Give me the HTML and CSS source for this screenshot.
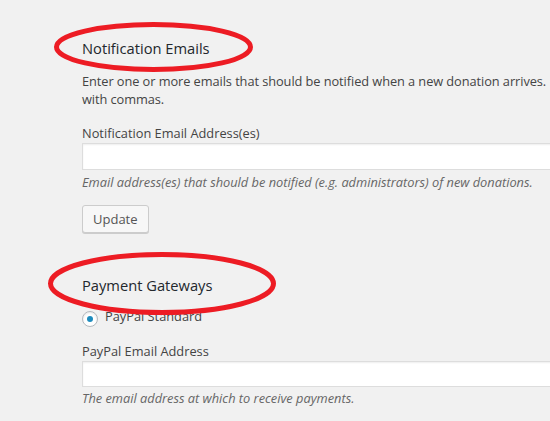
FILE: index.html
```html
<!DOCTYPE html>
<html lang="en">
<head>
<meta charset="utf-8">
<title>Settings</title>
<link rel="stylesheet" href="styles.css">
</head>
<body>
<div class="page">
  <div class="wrap">
    <h3 class="section-title">Notification Emails</h3>
    <p class="intro">Enter one or more emails that should be notified when a new donation arrives.<br>with commas.</p>
    <label class="field-label" for="notify">Notification Email Address(es)</label>
    <input class="text-input" id="notify" type="text">
    <p class="description">Email address(es) that should be notified (e.g. administrators) of new donations.</p>
    <button class="button" type="button">Update</button>

    <h3 class="section-title gateways">Payment Gateways</h3>
    <div class="radio-row">
      <span class="radio checked"></span>
      <span class="radio-label">PayPal Standard</span>
    </div>
    <label class="field-label paypal" for="paypal">PayPal Email Address</label>
    <input class="text-input short" id="paypal" type="text">
    <p class="description tight">The email address at which to receive payments.</p>
  </div>

  <svg class="annotations" width="550" height="421" viewBox="0 0 550 421">
    <ellipse cx="153.5" cy="47" rx="97" ry="22.5" />
    <ellipse cx="162" cy="283.5" rx="111.5" ry="29" />
  </svg>
</div>
</body>
</html>
```
FILE: styles.css
```css
html, body {
  margin: 0;
  padding: 0;
}
body {
  background: #f1f1f1;
  font-family: "Open Sans", "Liberation Sans", sans-serif;
  font-size: 12.8px;
  line-height: 18px;
  color: #444;
  width: 550px;
  height: 421px;
  overflow: hidden;
}
.page {
  position: relative;
  width: 550px;
  height: 421px;
  overflow: hidden;
}
.wrap {
  padding: 38px 0 0 82px;
  width: 700px;
  display: flex;
  flex-direction: column;
  align-items: flex-start;
}
.section-title {
  margin: 0;
  font-size: 14.7px;
  font-weight: 500;
  line-height: 20px;
  color: #23282d;
}
.intro {
  margin: 14px 0 0;
  white-space: nowrap;
  letter-spacing: -0.07px;
}
.field-label {
  margin-top: 16px;
  display: block;
}
.text-input {
  margin: 1px 0 0;
  box-sizing: border-box;
  width: 600px;
  height: 27px;
  border: 1px solid #ddd;
  background: #fff;
  box-shadow: inset 0 1px 2px rgba(0, 0, 0, 0.07);
  padding: 3px 5px;
  font: inherit;
}
.text-input.short {
  height: 26px;
}
.description {
  margin: 3px 0 0;
  font-style: italic;
  color: #666;
}
.description.tight {
  margin-top: 2px;
}
.button {
  margin-top: 14px;
  box-sizing: border-box;
  height: 28px;
  padding: 0 10px 1px;
  border: 1px solid #ccc;
  border-radius: 3px;
  background: #f7f7f7;
  box-shadow: 0 1px 0 #ccc;
  color: #555;
  font-family: inherit;
  font-size: 13px;
  line-height: 26px;
}
.gateways {
  margin-top: 42px;
}
.radio-row {
  margin-top: 12px;
  display: flex;
  align-items: flex-start;
  gap: 7px;
}
.radio {
  margin-top: 4px;
  box-sizing: border-box;
  width: 16px;
  height: 16px;
  border: 1px solid #b4b9be;
  border-radius: 50%;
  background: #fff;
  box-shadow: inset 0 1px 2px rgba(0, 0, 0, 0.1);
  display: flex;
  align-items: center;
  justify-content: center;
}
.radio.checked::before {
  content: "";
  width: 6px;
  height: 6px;
  border-radius: 50%;
  background: #1e8cbe;
}
.radio-label {
  line-height: 18px;
}
.field-label.paypal {
  margin-top: 15px;
}
.annotations {
  position: absolute;
  left: 0;
  top: 0;
  pointer-events: none;
}
.annotations ellipse {
  fill: none;
  stroke: #ed1c24;
  stroke-width: 5;
}
```
